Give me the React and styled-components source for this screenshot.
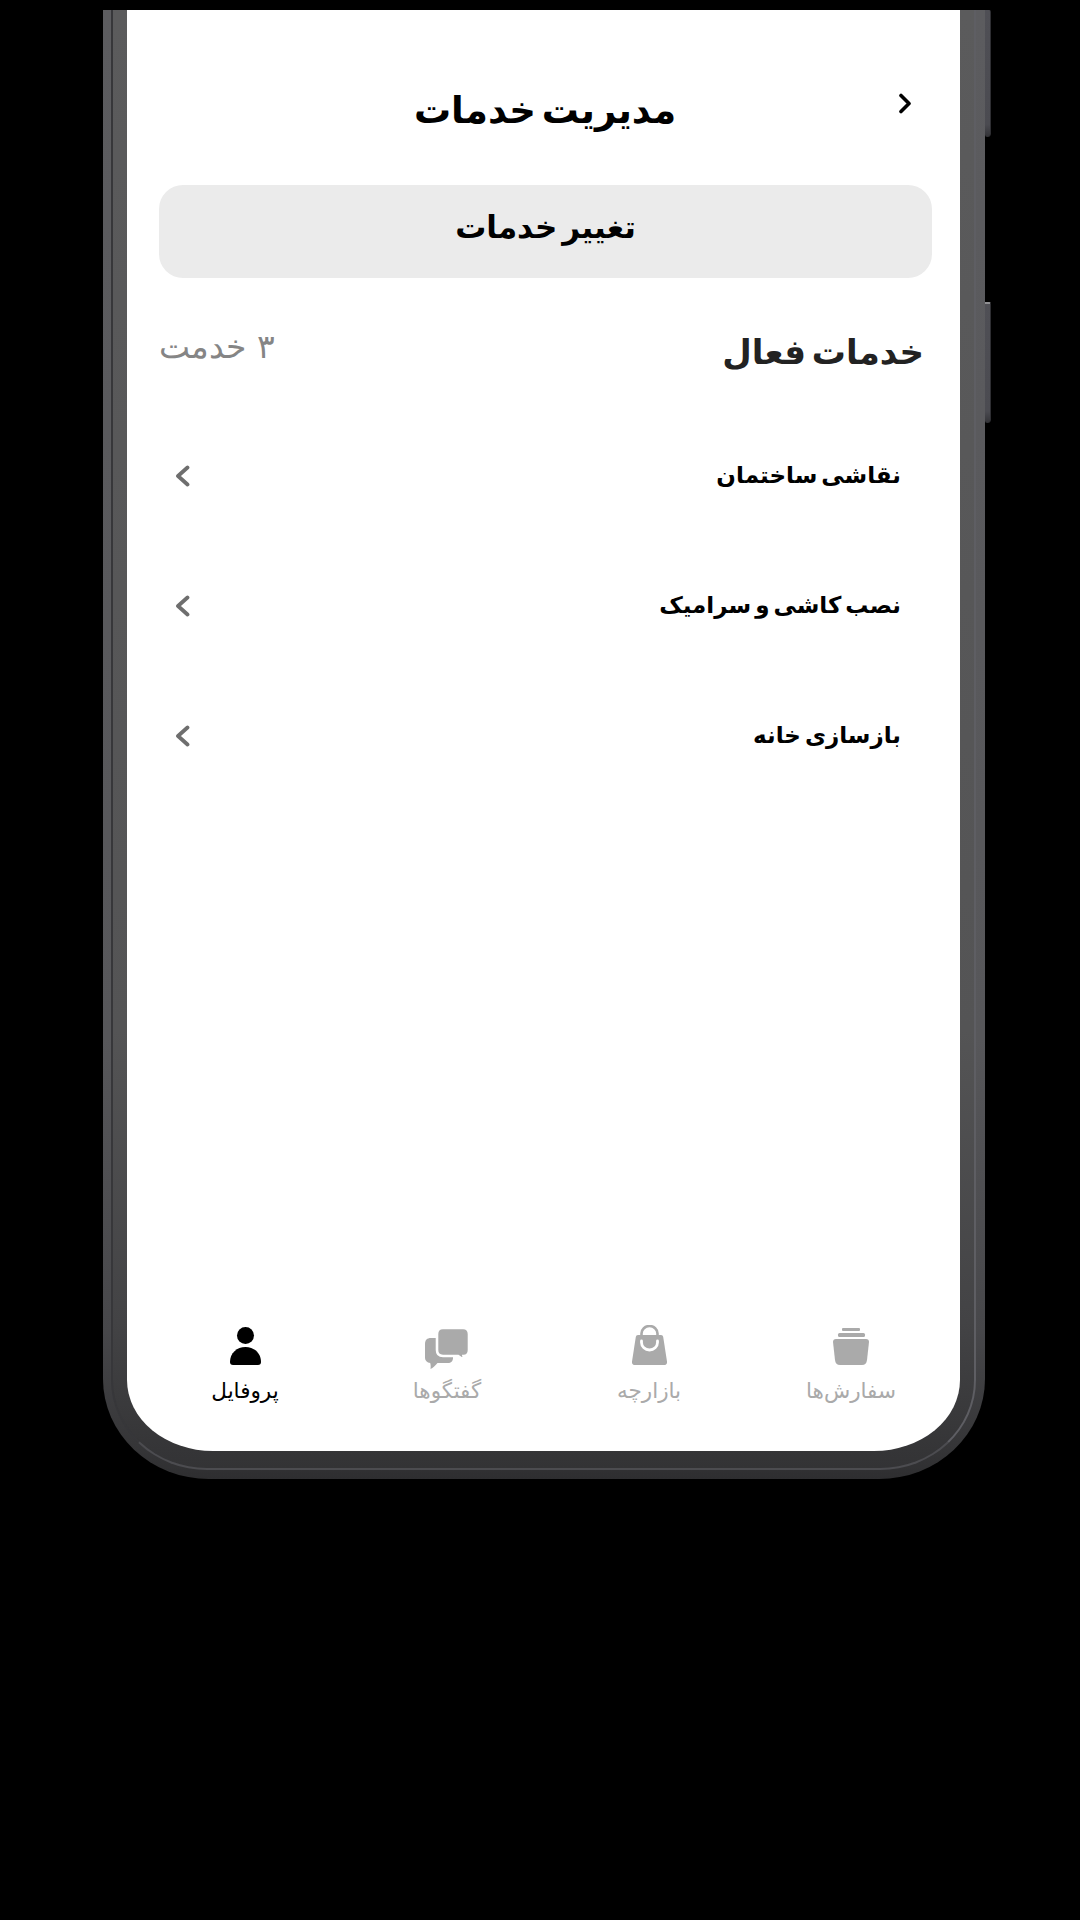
import React from 'react';
import styled, { createGlobalStyle } from 'styled-components';

const Global = createGlobalStyle`
  html, body { margin: 0; background: #000; }
  body { width: 1080px; height: 1920px; overflow: hidden; font-family: "DejaVu Sans", sans-serif; }
`;
const Stage = styled.div`
  width: 1080px; height: 1920px; background: #000; padding: 10px 95px 0 103px; box-sizing: border-box;
`;
const Frame = styled.div`
  position: relative; width: 882px; height: 1469px; box-sizing: border-box;
  padding: 0 9px 9px 8px; border-radius: 0 0 106px 106px / 0 0 100px 100px;
  background: linear-gradient(180deg, #5c5c5f 0%, #57575a 70%, #47474a 90%, #353537 98%, #2e2e30 100%);
`;
const Bezel = styled.div`
  height: 100%; box-sizing: border-box; padding: 0 14px 17px 14px;
  border-style: solid; border-width: 0 2px 2px 2px;
  border-color: #37373a #5e5e63 #4c4c50 #37373a;
  border-radius: 0 0 96px 96px / 0 0 90px 90px;
  background: linear-gradient(180deg, #5b5b5c 0%, #545455 70%, #434345 90%, #333335 100%);
`;
const SideKey = styled.span`
  position: absolute; right: -6px; top: ${p => p.$top}px; width: 6px; height: ${p => p.$h}px;
  background: linear-gradient(180deg, #4f4f55 0%, #4b4b51 90%, #333337 100%);
  border-radius: 0 2px 5px 3px; box-sizing: border-box;
  border-right: 1px solid #2e2e32;
  border-top: ${p => (p.$cap ? '2px solid #8f8f92' : 'none')};
`;
const Screen = styled.main`
  height: 100%; background: #fff; border-radius: 0 0 86px 86px / 0 0 71px 71px; overflow: hidden;
  display: flex; flex-direction: column; direction: rtl;
`;
const Header = styled.header`
  height: 175px; flex: none; display: grid; grid-template-columns: 1fr auto 1fr; align-items: start; color: #000;
  padding-left: 3px;
`;
const Title = styled.h1`
  margin: 0; padding-top: 74px; font-size: 37px; line-height: 54px; font-weight: 700; word-spacing: -7px;
`;
const BackIcon = styled.svg`
  width: 14px; height: 21px; margin: 83px 48px 0 0; justify-self: start; display: block;
`;
const Action = styled.div`
  margin: 0 28px 0 32px; height: 93px; flex: none; box-sizing: border-box; padding-bottom: 9px; border-radius: 24px; background: #ebebeb;
  display: flex; align-items: center; justify-content: center; font-size: 31px; font-weight: 700; color: #000; word-spacing: -6px;
`;
const Section = styled.div`
  margin: 52px 36px 0 32px; height: 81px; flex: none; display: flex; justify-content: space-between; align-items: flex-start;
`;
const SectionTitle = styled.h2`
  margin: 0; font-size: 34px; line-height: 44px; color: #222; font-weight: 700; word-spacing: -6px;
`;
const Count = styled.span`
  font-size: 33px; line-height: 34px; color: #858585; font-weight: 300;
`;
const List = styled.div`display: flex; flex-direction: column;`;
const Row = styled.div`
  height: 130px; margin: 0 59px 0 48px; display: flex; align-items: center; justify-content: space-between;
  font-weight: 700; font-size: 23px; color: #000; word-spacing: -4px;
`;
const RowName = styled.span`padding-bottom: 3px;`;
const RowChevron = styled.svg`width: 15px; height: 22px; display: block;`;
const Nav = styled.nav`
  margin-top: auto; display: grid; grid-template-columns: repeat(4, 202px); justify-content: center;
  padding: 0 0 43px 9px;
`;
const NavItem = styled.div`
  display: flex; flex-direction: column; align-items: center; color: ${p => (p.$active ? '#000' : '#aaa')};
`;
const IconSlot = styled.div`
  height: 42px; display: flex; align-items: flex-end; color: inherit;
`;
const NavIcon = styled.svg`display: block; fill: currentColor;`;
const ChatSvg = styled(NavIcon)`margin-bottom: -4px;`;
const NavLabel = styled.span`
  margin-top: 9px; font-size: 21.5px; line-height: 34px;
`;

const Back = () => (
  <BackIcon viewBox="0 0 14 21" fill="none"><path d="M3 2.5 L11 10.5 L3 18.5" stroke="#000" strokeWidth="3.6" strokeLinecap="round" strokeLinejoin="round" /></BackIcon>
);
const Chevron = () => (
  <RowChevron viewBox="0 0 15 22" fill="none"><path d="M12.5 2.5 L3 11 L12.5 19.5" stroke="#6e6e6e" strokeWidth="3.8" strokeLinecap="round" strokeLinejoin="round" /></RowChevron>
);
const OrdersIcon = () => (
  <NavIcon width="36" height="37" viewBox="0 0 36 37">
    <rect x="9" y="0" width="18" height="3" rx="1" />
    <rect x="5" y="5" width="27" height="4" rx="1.5" />
    <path d="M3 11 H33 C35 11 36 12.3 36 14 L34 32 C33.6 35.2 32 37 29 37 H7 C4 37 2.4 35.2 2 32 L0 14 C0 12.3 1 11 3 11Z" />
  </NavIcon>
);
const BagIcon = () => (
  <NavIcon width="35" height="40" viewBox="0 0 35 40">
    <path d="M9.5 12 V8.5 a8 7.5 0 0 1 16 0 V12" fill="none" stroke="currentColor" strokeWidth="2.6" />
    <path d="M6 10 H29 C30.2 10 31 10.8 31.2 12 L35 36.5 C35.3 38.6 34 40 32 40 H3 C1 40 -0.3 38.6 0 36.5 L3.8 12 C4 10.8 4.8 10 6 10Z" />
    <path d="M9.5 16 V17.5 a8 7.5 0 0 0 16 0 V16" fill="none" stroke="#fff" strokeWidth="2.8" strokeLinecap="round" />
  </NavIcon>
);
const ChatIcon = () => (
  <ChatSvg width="44" height="41" viewBox="0 0 44 41">
    <path d="M6 10 H24 C27 10 28 12 28 15 V30 C28 33 26 35 23 35 H12.5 C10.5 37.5 8 40 5.5 41 C5.8 39 5.8 37 5.2 35 C2 34.6 0 32.5 0 30 V16 C0 12 2 10 6 10Z" />
    <path d="M18 0 H38 C42 0 44 2 44 6 V22 C44 26 42 28 38.5 28 C38.8 29.5 39.5 31 40 31.5 C37.5 31 35 29.8 33 28 H18 C14 28 12 26 12 22 V6 C12 2 14 0 18 0Z" stroke="#fff" strokeWidth="2.6" />
  </ChatSvg>
);
const PersonIcon = () => (
  <NavIcon width="31" height="38" viewBox="0 0 31 38">
    <circle cx="15.5" cy="8.5" r="8.5" />
    <path d="M0 35 C0 26 7 20 15.5 20 C24 20 31 26 31 35 C31 37 30 38 28 38 H3 C1 38 0 37 0 35Z" />
  </NavIcon>
);

const services = ['نقاشی ساختمان', 'نصب کاشی و سرامیک', 'بازسازی خانه'];
const tabs = [
  { label: 'سفارش‌ها', Icon: OrdersIcon },
  { label: 'بازارچه', Icon: BagIcon },
  { label: 'گفتگوها', Icon: ChatIcon },
  { label: 'پروفایل', Icon: PersonIcon, active: true },
];

export default function App() {
  return (
    <>
      <Global />
      <Stage>
        <Frame>
          <SideKey $top={0} $h={127} />
          <SideKey $top={292} $h={121} $cap />
          <Bezel>
            <Screen>
              <Header>
                <Back />
                <Title>مدیریت خدمات</Title>
              </Header>
              <Action>تغییر خدمات</Action>
              <Section>
                <SectionTitle>خدمات فعال</SectionTitle>
                <Count>۳ خدمت</Count>
              </Section>
              <List>
                {services.map(s => (
                  <Row key={s}><RowName>{s}</RowName><Chevron /></Row>
                ))}
              </List>
              <Nav>
                {tabs.map(({ label, Icon, active }) => (
                  <NavItem key={label} $active={active}>
                    <IconSlot><Icon /></IconSlot>
                    <NavLabel>{label}</NavLabel>
                  </NavItem>
                ))}
              </Nav>
            </Screen>
          </Bezel>
        </Frame>
      </Stage>
    </>
  );
}
